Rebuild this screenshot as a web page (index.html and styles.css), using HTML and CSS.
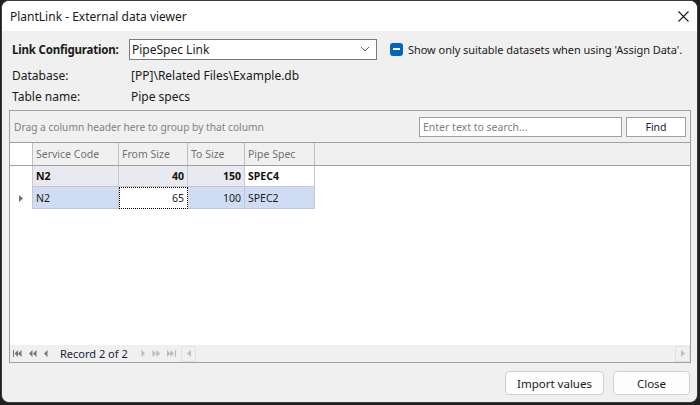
FILE: index.html
```html
<!DOCTYPE html>
<html>
<head>
<meta charset="utf-8">
<link rel="stylesheet" href="styles.css">
</head>
<body>
<div class="window">
  <div class="titlebar">
    <span class="title">PlantLink - External data viewer</span>
    <svg class="close-x" width="11" height="11" viewBox="0 0 11 11"><path d="M0.5 0.5 L10.5 10.5 M10.5 0.5 L0.5 10.5" stroke="#1a1a1a" stroke-width="1.1" fill="none"/></svg>
  </div>
  <div class="content">
    <div class="link-row">
      <span class="link-label">Link Configuration:</span>
      <div class="combo">
        <span>PipeSpec Link</span>
        <svg width="10" height="6" viewBox="0 0 10 6"><path d="M1 1 L5 5 L9 1" stroke="#5a5a5a" stroke-width="1" fill="none"/></svg>
      </div>
      <div class="check">
        <span class="check-box"><span class="check-dash"></span></span>
        <span class="check-text">Show only suitable datasets when using 'Assign Data'.</span>
      </div>
    </div>
    <div class="info-row first"><span class="info-label">Database:</span><span>[PP]\Related Files\Example.db</span></div>
    <div class="info-row"><span class="info-label">Table name:</span><span>Pipe specs</span></div>

    <div class="grid">
      <div class="group-panel">
        <span class="group-hint">Drag a column header here to group by that column</span>
        <div class="search">Enter text to search...</div>
        <div class="find">Find</div>
      </div>
      <div class="grid-body">
        <div class="grow header">
          <div class="cell ind"></div>
          <div class="cell hc">Service Code</div>
          <div class="cell hc">From Size</div>
          <div class="cell hc">To Size</div>
          <div class="cell hc">Pipe Spec</div>
          <div class="cell fill"></div>
        </div>
        <div class="grow row1">
          <div class="cell ind"></div>
          <div class="cell dc b">N2</div>
          <div class="cell dc b num">40</div>
          <div class="cell dc b num">150</div>
          <div class="cell dc b white">SPEC4</div>
        </div>
        <div class="grow row2">
          <div class="cell ind"><svg width="4" height="7" viewBox="0 0 4 7"><path d="M0 0 L4 3.5 L0 7 Z" fill="#707070"/></svg></div>
          <div class="cell dc">N2</div>
          <div class="cell dc num focus">65</div>
          <div class="cell dc num">100</div>
          <div class="cell dc">SPEC2</div>
        </div>
      </div>
      <div class="navbar">
        <div class="nav">
          <svg width="9" height="7" viewBox="0 0 9 7"><rect x="0" y="0" width="1" height="7" fill="#777"/><path d="M1.5 3.5 L5 0 L5 7 Z M5 3.5 L8.5 0 L8.5 7 Z" fill="#777"/></svg>
          <svg width="8" height="7" viewBox="0 0 8 7"><path d="M0 3.5 L3.5 0 L3.5 7 Z M4 3.5 L7.5 0 L7.5 7 Z" fill="#777"/></svg>
          <svg width="4" height="7" viewBox="0 0 4 7"><path d="M0 3.5 L3.5 0 L3.5 7 Z" fill="#777"/></svg>
          <span class="record">Record 2 of 2</span>
          <svg width="4" height="7" viewBox="0 0 4 7"><path d="M4 3.5 L0.5 0 L0.5 7 Z" fill="#bbb"/></svg>
          <svg width="8" height="7" viewBox="0 0 8 7"><path d="M4 3.5 L0.5 0 L0.5 7 Z M8 3.5 L4.5 0 L4.5 7 Z" fill="#bbb"/></svg>
          <svg width="9" height="7" viewBox="0 0 9 7"><path d="M3.5 3.5 L0 0 L0 7 Z M7 3.5 L3.5 0 L3.5 7 Z" fill="#bbb"/><rect x="8" y="0" width="1" height="7" fill="#bbb"/></svg>
        </div>
        <div class="hscroll">
          <div class="sbtn"><svg width="4" height="7" viewBox="0 0 4 7"><path d="M0 3.5 L4 0 L4 7 Z" fill="#c0c0c0"/></svg></div>
          <div class="strack"></div>
          <div class="sbtn"><svg width="4" height="7" viewBox="0 0 4 7"><path d="M4 3.5 L0 0 L0 7 Z" fill="#c0c0c0"/></svg></div>
        </div>
      </div>
    </div>

    <div class="buttons">
      <div class="btn import">Import values</div>
      <div class="btn close">Close</div>
    </div>
  </div>
</div>
</body>
</html>
```

FILE: styles.css
```css
html, body {
  margin: 0;
  padding: 0;
}
body {
  width: 700px;
  height: 405px;
  background: #1f1f1f;
  font-family: "Noto Sans", "DejaVu Sans", sans-serif;
  font-size: 12px;
  color: #1a1a1a;
  overflow: hidden;
}
.window {
  box-sizing: border-box;
  margin-left: 1px;
  width: 697px;
  height: 403px;
  background: #f0f0f0;
  border: 1px solid #3c3c3c;
  border-radius: 8px;
  overflow: hidden;
  display: flex;
  flex-direction: column;
}
.titlebar {
  height: 30px;
  flex: none;
  background: #ffffff;
  display: flex;
  align-items: center;
  padding-left: 8px;
  padding-right: 8px;
}
.title {
  flex: 1;
  font-size: 12px;
  color: #1a1a1a;
}
.content {
  flex: 1;
  display: flex;
  flex-direction: column;
  padding: 8px 5px 0 7px;
}
.link-row {
  display: flex;
  align-items: center;
  height: 20px;
  white-space: nowrap;
}
.link-label {
  flex: none;
  width: 120px;
  padding-left: 3px;
  box-sizing: border-box;
  font-weight: bold;
  font-size: 11.5px;
  letter-spacing: -0.2px;
}
.combo {
  flex: none;
  box-sizing: border-box;
  width: 248px;
  height: 21px;
  background: #fff;
  border: 1px solid #7a7a7a;
  display: flex;
  align-items: center;
  justify-content: space-between;
  padding: 0 6px 0 2px;
}
.check {
  display: flex;
  align-items: center;
  margin-left: 13px;
  gap: 5px;
}
.check-box {
  flex: none;
  width: 13px;
  height: 13px;
  border-radius: 3px;
  background: #0067c0;
  display: flex;
  align-items: center;
  justify-content: center;
}
.check-dash {
  width: 7px;
  height: 2px;
  background: #fff;
}
.check-text {
  font-size: 11px;
  letter-spacing: -0.05px;
}
.info-row {
  display: flex;
  height: 21px;
  align-items: center;
}
.info-row.first {
  margin-top: 6px;
}
.info-label {
  box-sizing: border-box;
  width: 122px;
  padding-left: 3px;
}
.grid {
  margin-top: 3px;
  box-sizing: border-box;
  width: 682px;
  height: 253px;
  border: 1px solid #a0a0a0;
  display: flex;
  flex-direction: column;
  font-size: 10.5px;
}
.group-panel {
  height: 32px;
  flex: none;
  box-sizing: border-box;
  border-bottom: 1px solid #a0a0a0;
  display: flex;
  align-items: center;
  padding-left: 4px;
  padding-right: 4px;
}
.group-hint {
  flex: 1;
  color: #808080;
  font-size: 10.2px;
}
.search {
  box-sizing: border-box;
  width: 203px;
  height: 20px;
  border: 1px solid #a0a0a0;
  background: #fff;
  color: #808080;
  padding-left: 3px;
  display: flex;
  align-items: center;
}
.find {
  box-sizing: border-box;
  width: 60px;
  height: 20px;
  margin-left: 4px;
  border: 1px solid #a0a0a0;
  background: #fff;
  display: flex;
  align-items: center;
  justify-content: center;
  color: #1a1a40;
}
.grid-body {
  flex: 1;
  background: #fff;
}
.grow {
  display: grid;
  grid-template-columns: 23px 86px 69px 57px 70px;
}
.header {
  grid-template-columns: 23px 86px 69px 57px 70px 1fr;
  background: #f0f0f0;
  height: 23px;
  box-sizing: border-box;
  border-bottom: 1px solid #a0a0a0;
}
.cell {
  box-sizing: border-box;
  display: flex;
  align-items: center;
  padding: 0 3px;
  white-space: nowrap;
}
.header .cell {
  border-right: 1px solid #c0c0c0;
}
.header .fill {
  border-right: none;
}
.hc {
  color: #707070;
}
.row1 {
  height: 21px;
}
.row2 {
  height: 22px;
}
.ind {
  background: #fff;
  border-right: 1px solid #c8c8c8;
  justify-content: center;
}
.dc {
  border-right: 1px solid #c8c8c8;
  border-bottom: 1px solid #c8c8c8;
}
.row1 .dc {
  background: #e9e9f1;
}
.row2 .dc {
  background: #cfdcf3;
}
.b {
  font-weight: bold;
  color: #101010;
}
.num {
  justify-content: flex-end;
}
.row1 .white {
  background: #fff;
}
.row2 .focus {
  background: #fff;
  border: 1px dotted #000;
}
.navbar {
  height: 17px;
  flex: none;
  display: flex;
  align-items: center;
  background: #f0f0f0;
}
.nav {
  flex: none;
  display: flex;
  align-items: center;
  width: 168px;
  padding-left: 3px;
  gap: 7px;
  white-space: nowrap;
}
.record {
  font-size: 11px;
  color: #1a1a40;
  margin: 0 6px 0 5px;
}
.hscroll {
  flex: 1;
  display: flex;
  height: 16px;
  background: #f0f0f0;
}
.sbtn {
  box-sizing: border-box;
  width: 15px;
  height: 16px;
  border: 1px solid #e2e2e2;
  display: flex;
  align-items: center;
  justify-content: center;
}
.strack {
  flex: 1;
}
.buttons {
  display: flex;
  justify-content: flex-end;
  gap: 9px;
  margin-top: 8px;
  padding-right: 2px;
}
.btn {
  box-sizing: border-box;
  height: 24px;
  font-size: 11.5px;
  background: #fdfdfd;
  border: 1px solid #d0d0d0;
  border-radius: 4px;
  display: flex;
  align-items: center;
  justify-content: center;
}
.import {
  width: 99px;
}
.close {
  width: 77px;
}
```
